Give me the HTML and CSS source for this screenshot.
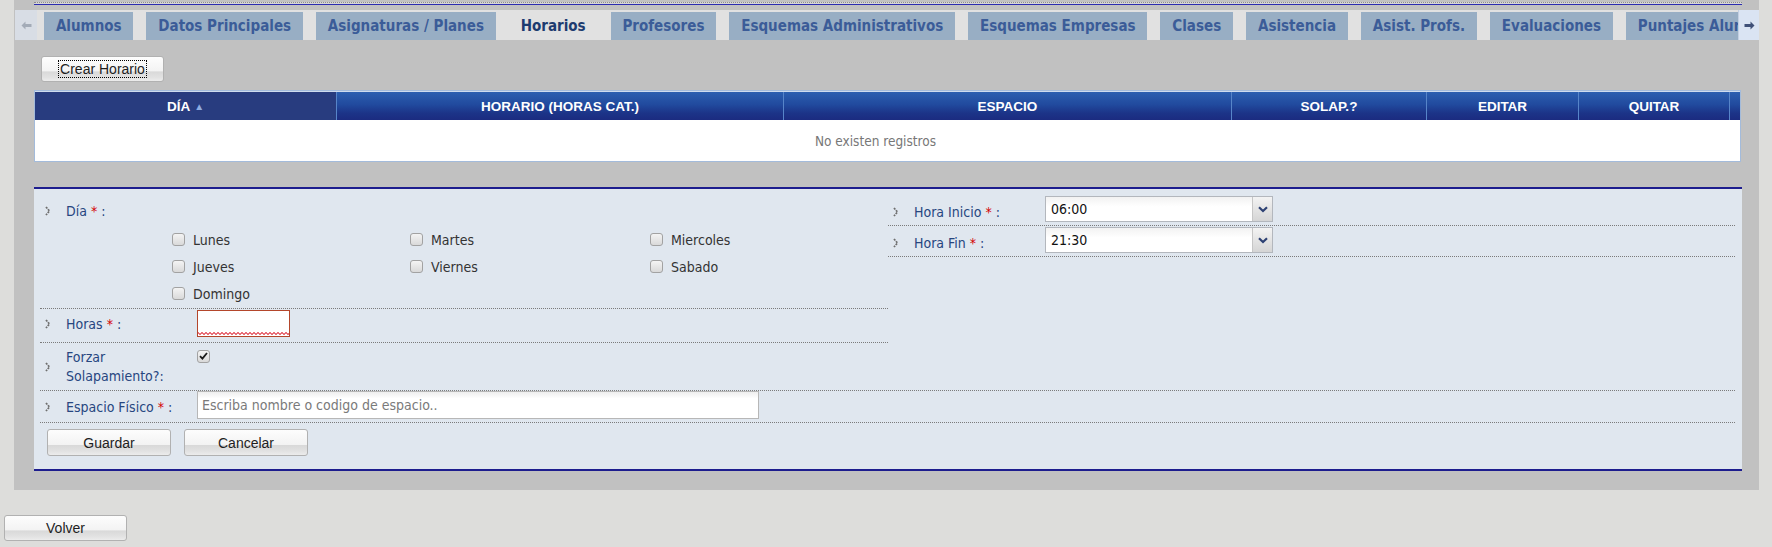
FILE: index.html
```html
<!DOCTYPE html>
<html lang="es">
<head>
<meta charset="utf-8">
<title>Horarios</title>
<link rel="stylesheet" href="styles.css">
</head>
<body>
<div class="panel">
  <div class="topline"></div>
  <div class="tabstrip">
    <div class="tabnav tabnav-prev">
      <svg width="11" height="9" viewBox="0 0 11 9"><path d="M0.5 4.5 L4.5 0.5 L4.5 3 L10.5 3 L10.5 6 L4.5 6 L4.5 8.5 Z" fill="#a3abb7"/></svg>
    </div>
    <div class="tabs">
      <span class="tab">Alumnos</span>
      <span class="tab">Datos Principales</span>
      <span class="tab">Asignaturas / Planes</span>
      <span class="tab tab-active">Horarios</span>
      <span class="tab">Profesores</span>
      <span class="tab">Esquemas Administrativos</span>
      <span class="tab">Esquemas Empresas</span>
      <span class="tab">Clases</span>
      <span class="tab">Asistencia</span>
      <span class="tab">Asist. Profs.</span>
      <span class="tab">Evaluaciones</span>
      <span class="tab">Puntajes Alumnos</span>
    </div>
    <div class="tabnav tabnav-next">
      <svg width="11" height="9" viewBox="0 0 11 9"><path d="M10.5 4.5 L6.5 0.5 L6.5 3 L0.5 3 L0.5 6 L6.5 6 L6.5 8.5 Z" fill="#3f5078"/></svg>
    </div>
  </div>

  <div class="content">
    <div class="toolbar">
      <button class="btn btn-create" type="button"><span class="focus">Crear Horario</span></button>
    </div>

    <div class="grid">
      <div class="grid-head">
        <div class="th th-sorted">DÍA <span class="sort">&#9650;</span></div>
        <div class="th">HORARIO (HORAS CAT.)</div>
        <div class="th">ESPACIO</div>
        <div class="th">SOLAP.?</div>
        <div class="th">EDITAR</div>
        <div class="th">QUITAR</div>
        <div class="th th-gutter"></div>
      </div>
      <div class="grid-empty">No existen registros</div>
    </div>

    <form class="form">
      <div class="form-top">
        <div class="col col-left">
          <div class="field field-day">
            <div class="field-line">
              <div class="lab-cell">
                <svg class="bullet" width="6" height="10" viewBox="0 0 6 10"><path d="M1 1 L4.5 5 L1 9" fill="none" stroke="#6e6e6e" stroke-width="1.8" stroke-dasharray="2 1"/></svg>
                <span class="lab">Día <span class="req">*</span> :</span>
              </div>
            </div>
            <div class="days">
              <label class="chk"><span class="box"></span>Lunes</label>
              <label class="chk"><span class="box"></span>Martes</label>
              <label class="chk"><span class="box"></span>Miercoles</label>
              <label class="chk"><span class="box"></span>Jueves</label>
              <label class="chk"><span class="box"></span>Viernes</label>
              <label class="chk"><span class="box"></span>Sabado</label>
              <label class="chk"><span class="box"></span>Domingo</label>
            </div>
          </div>
          <div class="field field-horas">
            <div class="lab-cell">
              <svg class="bullet" width="6" height="10" viewBox="0 0 6 10"><path d="M1 1 L4.5 5 L1 9" fill="none" stroke="#6e6e6e" stroke-width="1.8" stroke-dasharray="2 1"/></svg>
              <span class="lab">Horas <span class="req">*</span> :</span>
            </div>
            <div class="val"><span class="input-invalid"></span></div>
          </div>
        </div>
        <div class="col col-right">
          <div class="field field-hora">
            <div class="lab-cell">
              <svg class="bullet" width="6" height="10" viewBox="0 0 6 10"><path d="M1 1 L4.5 5 L1 9" fill="none" stroke="#6e6e6e" stroke-width="1.8" stroke-dasharray="2 1"/></svg>
              <span class="lab">Hora Inicio <span class="req">*</span> :</span>
            </div>
            <div class="val">
              <div class="select"><span class="select-value">06:00</span><span class="select-btn"><svg width="10" height="7" viewBox="0 0 10 7"><path d="M1 1.2 L5 5 L9 1.2" fill="none" stroke="#2d4173" stroke-width="2.2"/></svg></span></div>
            </div>
          </div>
          <div class="field field-hora">
            <div class="lab-cell">
              <svg class="bullet" width="6" height="10" viewBox="0 0 6 10"><path d="M1 1 L4.5 5 L1 9" fill="none" stroke="#6e6e6e" stroke-width="1.8" stroke-dasharray="2 1"/></svg>
              <span class="lab">Hora Fin <span class="req">*</span> :</span>
            </div>
            <div class="val">
              <div class="select"><span class="select-value">21:30</span><span class="select-btn"><svg width="10" height="7" viewBox="0 0 10 7"><path d="M1 1.2 L5 5 L9 1.2" fill="none" stroke="#2d4173" stroke-width="2.2"/></svg></span></div>
            </div>
          </div>
        </div>
      </div>

      <div class="field field-forzar">
        <div class="lab-cell">
          <svg class="bullet" width="6" height="10" viewBox="0 0 6 10"><path d="M1 1 L4.5 5 L1 9" fill="none" stroke="#6e6e6e" stroke-width="1.8" stroke-dasharray="2 1"/></svg>
          <span class="lab lab-two">Forzar<br>Solapamiento?:</span>
        </div>
        <div class="val val-top">
          <span class="box box-checked"><svg width="9" height="8" viewBox="0 0 9 8"><path d="M1 4.2 L3.4 6.6 L8 1" fill="none" stroke="#1a1a1a" stroke-width="1.8"/></svg></span>
        </div>
      </div>

      <div class="field field-espacio">
        <div class="lab-cell">
          <svg class="bullet" width="6" height="10" viewBox="0 0 6 10"><path d="M1 1 L4.5 5 L1 9" fill="none" stroke="#6e6e6e" stroke-width="1.8" stroke-dasharray="2 1"/></svg>
          <span class="lab">Espacio Físico <span class="req">*</span> :</span>
        </div>
        <div class="val"><input class="text-input" type="text" placeholder="Escriba nombre o codigo de espacio.."></div>
      </div>

      <div class="actions">
        <button class="btn" type="button">Guardar</button>
        <button class="btn" type="button">Cancelar</button>
      </div>
    </form>
  </div>
</div>

<div class="footer">
  <button class="btn" type="button">Volver</button>
</div>
</body>
</html>
```

FILE: styles.css
```css
* { box-sizing: border-box; }

html, body {
  margin: 0;
  padding: 0;
}

body {
  width: 1772px;
  height: 547px;
  overflow: hidden;
  background: #dddddb;
  font-family: "DejaVu Sans Condensed", "DejaVu Sans", sans-serif;
  font-size: 14px;
  color: #333;
}

/* ---------- outer gray panel ---------- */
.panel {
  margin-left: 14px;
  width: 1745px;
  height: 490px;
  background: #c1c1c1;
  padding-top: 2px;
}

.topline {
  margin-left: 20px;
  width: 1708px;
  height: 3px;
  border-top: 1px dotted #8c8c8c;
  border-bottom: 1px solid #2b2bb0;
  background: #d6d6d6;
}

/* ---------- tabs ---------- */
.tabstrip {
  margin-top: 5px;
  margin-left: 1px;
  width: 1744px;
  height: 30px;
  background: #e1e1e1;
  display: flex;
}

.tabnav {
  flex: none;
  height: 30px;
  display: flex;
  align-items: center;
  justify-content: center;
}

.tabnav-prev {
  width: 22px;
  background: #d8dde5;
}

.tabnav-next {
  width: 21px;
  background: #dae4f3;
  border-left: 1px solid #c3cfe2;
}

.tabs {
  flex: 1;
  min-width: 0;
  overflow: hidden;
  display: flex;
  align-items: flex-end;
  gap: 13px;
  padding-left: 7px;
  white-space: nowrap;
}

.tab {
  flex: none;
  height: 28px;
  line-height: 28px;
  padding: 0 11.9px;
  background: #98aec4;
  color: #3b5c98;
  font-weight: bold;
  font-size: 15px;
}

.tab-active {
  background: #e1e1e1;
  color: #1d3b6f;
}

/* ---------- content ---------- */
.content {
  margin-left: 20px;
  width: 1708px;
}

.toolbar {
  padding-top: 16px;
  padding-left: 7px;
  height: 42px;
}

.btn {
  display: inline-flex;
  align-items: center;
  justify-content: center;
  width: 124px;
  height: 27px;
  padding: 0;
  border: 1px solid #b1b1b1;
  border-radius: 3px;
  background: linear-gradient(#fdfdfd 0%, #f3f3f3 58%, #d9d9d9 62%, #e2e2e2 85%, #ececec 100%);
  font-family: "Liberation Sans", Arial, sans-serif;
  font-size: 14px;
  color: #1e1e1e;
}

.btn-create {
  width: 123px;
  height: 26px;
}

.focus {
  outline: 1px dotted #000;
  outline-offset: 0;
  padding: 0 1px;
  line-height: 16px;
}

/* ---------- grid ---------- */
.grid {
  margin-top: 8px;
  width: 1707px;
  border: 1px solid #a3bbdb;
  background: #fff;
}

.grid-head {
  display: grid;
  grid-template-columns: 302px 447px 448px 195px 152px 151px 1fr;
  height: 29px;
  border-top: 1px solid #cfdcee;
  background: linear-gradient(#2c5fb0 0%, #214a9e 45%, #1c3488 75%, #1b2b80 100%);
}

.th {
  display: flex;
  align-items: center;
  justify-content: center;
  border-right: 1px solid #5785c9;
  color: #fff;
  font-family: "Liberation Sans", Arial, sans-serif;
  font-weight: bold;
  font-size: 13.5px;
}

.th-sorted {
  background: #283c7f;
}

.th-gutter {
  border-right: none;
}

.sort {
  font-size: 10px;
  color: #8eaee2;
  margin-left: 4px;
}

.grid-empty {
  height: 41px;
  display: flex;
  align-items: center;
  justify-content: center;
  padding-right: 24px;
  color: #777;
  font-size: 13.5px;
}

/* ---------- form ---------- */
.form {
  margin: 25px 0 0;
  width: 1708px;
  height: 284px;
  background: #e0e7ef;
  border-top: 2px solid #1d1d8e;
  border-bottom: 2px solid #1d1d8e;
  padding: 6px 7px 0 6px;
}

.form-top {
  display: grid;
  grid-template-columns: 848px 1fr;
  align-items: start;
}

.field {
  display: flex;
  align-items: center;
  border-bottom: 1px dotted #7b7b7b;
}

.lab-cell {
  flex: none;
  width: 157px;
  display: flex;
  align-items: center;
  padding-left: 5px;
}

.bullet {
  flex: none;
  margin-right: 15px;
}

.lab {
  color: #27467f;
  font-size: 14px;
}

.req {
  color: #d40000;
}

.field-day {
  display: block;
  padding-bottom: 1px;
}

.field-line {
  height: 28px;
  padding-top: 4px;
  display: flex;
  align-items: center;
}

.days {
  margin-top: 3px;
  margin-left: 132px;
  display: grid;
  grid-template-columns: 238px 240px 240px;
  grid-auto-rows: 27px;
}

.chk {
  display: flex;
  align-items: center;
  color: #333;
  font-size: 14px;
}

.box {
  flex: none;
  width: 13px;
  height: 13px;
  margin-right: 8px;
  border: 1px solid #a2a2a2;
  border-radius: 3px;
  background: linear-gradient(#f4f4f4, #d9d9d9);
  display: inline-flex;
  align-items: center;
  justify-content: center;
}

.field-horas {
  padding: 1px 0 5px;
}

.input-invalid {
  display: block;
  width: 93px;
  height: 27px;
  border: 1px solid #b4462b;
  background-color: #fff;
  background-image:
    linear-gradient(135deg, transparent 40%, #e8707a 40%, #e8707a 60%, transparent 60%),
    linear-gradient(45deg, transparent 40%, #e8707a 40%, #e8707a 60%, transparent 60%);
  background-size: 4px 3px, 4px 3px;
  background-position: 1px 21px, 3px 21px;
  background-repeat: repeat-x;
}

.col-right .field {
  padding: 1px 0 3px;
}

.col-right .lab-cell {
  padding-top: 5px;
}

.select {
  display: flex;
  width: 228px;
  height: 26px;
  border: 1px solid #b3b7bd;
  background: linear-gradient(#f2f2f2, #ffffff 40%);
}

.select-value {
  flex: 1;
  padding-left: 5px;
  line-height: 24px;
  color: #111;
  font-size: 14px;
}

.select-btn {
  flex: none;
  width: 20px;
  border-left: 1px solid #c6c6c6;
  background: linear-gradient(#f3f3f3, #d5d5d5);
  display: flex;
  align-items: center;
  justify-content: center;
}

.field-forzar {
  align-items: stretch;
  padding: 4px 0 4px;
}

.lab-two {
  line-height: 19px;
  padding-top: 1px;
}

.box-checked {
  margin-right: 0;
}

.field-espacio {
  padding: 0 0 3px;
}

.field-espacio .lab-cell {
  padding-top: 3px;
}

.text-input {
  display: block;
  width: 562px;
  height: 28px;
  margin: 0;
  border: 1px solid #b7b7b7;
  background: linear-gradient(#eeeeee, #ffffff 25%);
  padding: 0 4px;
  font-family: "DejaVu Sans Condensed", "DejaVu Sans", sans-serif;
  font-size: 14px;
  color: #333;
}

.text-input::placeholder {
  color: #7a7a7a;
}

.actions {
  display: flex;
  gap: 13px;
  padding: 6px 0 0 7px;
}

/* ---------- footer ---------- */
.footer {
  padding: 25px 0 0 4px;
}

.footer .btn {
  width: 123px;
  height: 26px;
}
```
